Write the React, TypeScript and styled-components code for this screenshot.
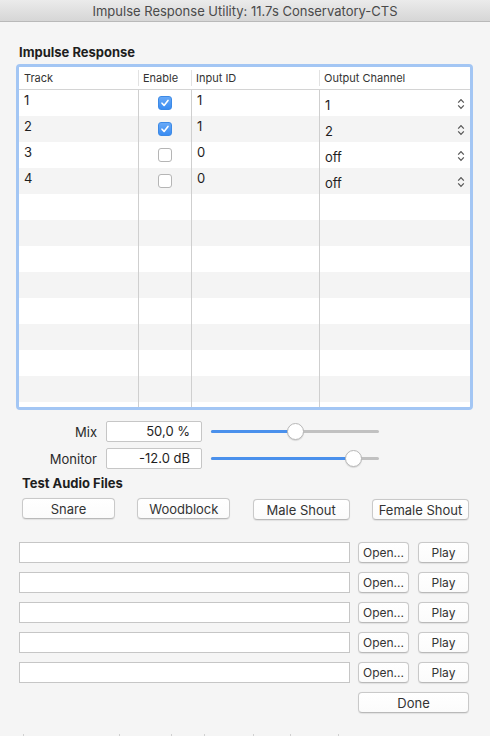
import React from "react";
import styled, { createGlobalStyle } from "styled-components";

const FONT = `Inter, "Liberation Sans", Arial, sans-serif`;

const Global = createGlobalStyle`
  html, body { margin: 0; padding: 0; background: #f5f5f5; }
  * { box-sizing: border-box; }
  body { font-family: ${FONT}; color: #2a2a2a; }
`;

const Window = styled.div`
  width: 490px;
  height: 736px;
  background: #f5f5f5;
  overflow: hidden;
  display: flex;
  flex-direction: column;
`;

const TitleBar = styled.div`
  height: 22px;
  flex: none;
  background: linear-gradient(#ebebeb, #d6d6d6);
  border-bottom: 1px solid #b9b9b9;
  display: flex;
  align-items: center;
  justify-content: center;
  font-size: 13px;
  color: #4a4a4a;
`;

const Content = styled.div`
  display: flex;
  flex-direction: column;
  padding-top: 22px;
`;

const SectionTitle = styled.div<{ $indent: number; $top?: number }>`
  font-size: 13px;
  line-height: 16px;
  font-weight: 700;
  color: #1e1e1e;
  margin-left: ${(p) => p.$indent}px;
  margin-top: ${(p) => p.$top ?? 0}px;
`;

const TableFrame = styled.div`
  margin: 4px 0 0 16px;
  width: 457px;
  height: 346px;
  border: 3px solid #a3c6f4;
  border-radius: 4px;
  background: #fff;
  display: flex;
  flex-direction: column;
  overflow: hidden;
`;

const COLS = "119px 53px 128px 1fr";

const HeaderRow = styled.div`
  display: grid;
  grid-template-columns: ${COLS};
  height: 23px;
  flex: none;
  border-bottom: 1px solid #d4d4d4;
  background: #fff;
`;

const HeaderCell = styled.div<{ $sep?: boolean }>`
  position: relative;
  font-size: 11px;
  color: #333;
  padding-left: 5px;
  display: flex;
  align-items: center;
  ${(p) =>
    p.$sep &&
    `&::before { content: ""; position: absolute; left: 0; top: 3px; bottom: 3px; width: 1px; background: #e2e2e2; }`}
`;

const Body = styled.div`
  flex: 1;
  overflow: hidden;
`;

const Row = styled.div<{ $striped: boolean }>`
  display: grid;
  grid-template-columns: ${COLS};
  height: 26px;
  background: ${(p) => (p.$striped ? "#f4f4f4" : "#fff")};
`;

const Cell = styled.div<{ $sep?: boolean }>`
  font-size: 13px;
  line-height: 16px;
  padding: 2px 0 0 5px;
  color: #1e1e1e;
  border-left: ${(p) => (p.$sep ? "1px solid #cfcfcf" : "none")};
`;

const CheckCell = styled.div`
  border-left: 1px solid #cfcfcf;
  display: flex;
  align-items: center;
  justify-content: center;
`;

const CheckBox = styled.div<{ $checked: boolean }>`
  width: 14px;
  height: 14px;
  border-radius: 3px;
  display: flex;
  align-items: center;
  justify-content: center;
  background: ${(p) => (p.$checked ? "linear-gradient(#68a9f7, #3a8cf2)" : "#fff")};
  border: 1px solid ${(p) => (p.$checked ? "#3d8ae6" : "#b5b5b5")};
`;

const PopupCell = styled.div`
  border-left: 1px solid #cfcfcf;
  display: flex;
  align-items: flex-start;
  justify-content: space-between;
  padding: 7px 5px 0 5px;
  font-size: 13px;
  line-height: 16px;
  color: #1e1e1e;
`;

const Chevrons = styled.svg`
  width: 8px;
  height: 12px;
  margin-top: 1px;
  flex: none;
`;

const ControlGrid = styled.div`
  display: grid;
  grid-template-columns: 97px 96px 168px;
  grid-auto-rows: 21px;
  column-gap: 9px;
  row-gap: 6px;
  margin-top: 11px;
  align-items: center;
`;

const Label = styled.div`
  font-size: 13px;
  text-align: right;
  color: #2a2a2a;
`;

const ValueField = styled.div`
  height: 21px;
  background: #fff;
  border: 1px solid #c6c6c6;
  border-radius: 2px;
  font-size: 13px;
  line-height: 19px;
  text-align: right;
  padding-right: 11px;
  color: #1e1e1e;
`;

const SliderWrap = styled.div`
  position: relative;
  height: 21px;
  display: flex;
  align-items: center;
`;

const Track = styled.div`
  position: relative;
  width: 100%;
  height: 3px;
  border-radius: 2px;
  background: #c1c1c1;
`;

const Fill = styled.div`
  position: absolute;
  left: 0;
  top: 0;
  height: 3px;
  border-radius: 2px;
  background: #4a90ec;
`;

const Thumb = styled.div`
  position: absolute;
  top: 2px;
  width: 17px;
  height: 17px;
  border-radius: 50%;
  background: #fff;
  border: 1px solid #b8b8b8;
  box-shadow: 0 1px 1px rgba(0, 0, 0, 0.12);
`;

const Slider = ({ value }: { value: number }) => {
  const left = value * (168 - 17);
  return (
    <SliderWrap>
      <Track>
        <Fill style={{ width: left + 8 }} />
      </Track>
      <Thumb style={{ left }} />
    </SliderWrap>
  );
};

const ButtonRow = styled.div`
  display: flex;
  justify-content: space-between;
  align-items: flex-start;
  margin: 7px 21px 0 22px;
`;

const PushButton = styled.button<{ $w: number; $size?: number; $dy?: number }>`
  width: ${(p) => p.$w}px;
  height: 21px;
  padding: 0;
  margin-top: ${(p) => p.$dy ?? 0}px;
  background: linear-gradient(#ffffff, #fbfbfb);
  border: 1px solid #c9c9c9;
  border-bottom-color: #b9b9b9;
  border-radius: 4px;
  box-shadow: 0 0.5px 1px rgba(0, 0, 0, 0.08);
  font-family: ${FONT};
  font-size: ${(p) => p.$size ?? 13}px;
  color: #333;
  flex: none;
`;

const FileList = styled.div`
  display: flex;
  flex-direction: column;
  gap: 9px;
  margin: 22px 0 0 19px;
`;

const FileRow = styled.div`
  display: flex;
  align-items: center;
`;

const FileField = styled.div`
  width: 331px;
  height: 21px;
  background: #fff;
  border: 1px solid #c6c6c6;
  margin-right: 8px;
`;

const DoneRow = styled.div`
  display: flex;
  padding-left: 339px;
`;

const Gap = styled.div<{ $w: number }>`
  width: ${(p) => p.$w}px;
  flex: none;
`;

const TickRow = styled.div`
  display: flex;
  margin-top: 21px;
  height: 3px;
`;

const Tick = styled.div<{ $at: number }>`
  width: 1px;
  height: 3px;
  background: #d0d0d0;
  margin-left: ${(p) => p.$at}px;
`;

const ChevronIcon = () => (
  <Chevrons viewBox="0 0 8 12">
    <path d="M1.2 4.6 L4 1.6 L6.8 4.6" fill="none" stroke="#555" strokeWidth="1.2" />
    <path d="M1.2 7.4 L4 10.4 L6.8 7.4" fill="none" stroke="#555" strokeWidth="1.2" />
  </Chevrons>
);

const CheckMark = () => (
  <svg width="10" height="10" viewBox="0 0 10 10">
    <path d="M2 5.2 L4.1 7.4 L8 2.4" fill="none" stroke="#fff" strokeWidth="1.6" strokeLinecap="round" strokeLinejoin="round" />
  </svg>
);

type TrackRow = { id: string; enabled: boolean; input: string; output: string };

const tracks: TrackRow[] = [
  { id: "1", enabled: true, input: "1", output: "1" },
  { id: "2", enabled: true, input: "1", output: "2" },
  { id: "3", enabled: false, input: "0", output: "off" },
  { id: "4", enabled: false, input: "0", output: "off" },
];

export default function App() {
  const emptyRows = Array.from({ length: 9 });
  return (
    <>
      <Global />
      <Window>
        <TitleBar>Impulse Response Utility: 11.7s Conservatory-CTS</TitleBar>
        <Content>
          <SectionTitle $indent={19}>Impulse Response</SectionTitle>
          <TableFrame>
            <HeaderRow>
              <HeaderCell>Track</HeaderCell>
              <HeaderCell $sep>Enable</HeaderCell>
              <HeaderCell $sep>Input ID</HeaderCell>
              <HeaderCell $sep>Output Channel</HeaderCell>
            </HeaderRow>
            <Body>
              {tracks.map((t, i) => (
                <Row key={t.id} $striped={i % 2 === 1}>
                  <Cell>{t.id}</Cell>
                  <CheckCell>
                    <CheckBox $checked={t.enabled}>{t.enabled && <CheckMark />}</CheckBox>
                  </CheckCell>
                  <Cell $sep>{t.input}</Cell>
                  <PopupCell>
                    <span>{t.output}</span>
                    <ChevronIcon />
                  </PopupCell>
                </Row>
              ))}
              {emptyRows.map((_, i) => (
                <Row key={"e" + i} $striped={(i + tracks.length) % 2 === 1}>
                  <Cell />
                  <Cell $sep />
                  <Cell $sep />
                  <Cell $sep />
                </Row>
              ))}
            </Body>
          </TableFrame>

          <ControlGrid>
            <Label>Mix</Label>
            <ValueField>50,0 %</ValueField>
            <Slider value={0.505} />
            <Label>Monitor</Label>
            <ValueField>-12.0 dB</ValueField>
            <Slider value={0.886} />
          </ControlGrid>

          <SectionTitle $indent={22} $top={6}>Test Audio Files</SectionTitle>
          <ButtonRow>
            <PushButton $w={93}>Snare</PushButton>
            <PushButton $w={93}>Woodblock</PushButton>
            <PushButton $w={97} $dy={1}>Male Shout</PushButton>
            <PushButton $w={97} $dy={1}>Female Shout</PushButton>
          </ButtonRow>

          <FileList>
            {[0, 1, 2, 3, 4].map((i) => (
              <FileRow key={i}>
                <FileField />
                <PushButton $w={51} $size={12}>Open...</PushButton>
                <Gap $w={9} />
                <PushButton $w={51} $size={12}>Play</PushButton>
              </FileRow>
            ))}
            <DoneRow>
              <PushButton $w={111}>Done</PushButton>
            </DoneRow>
          </FileList>

          <TickRow>
            <Tick $at={23} />
            <Tick $at={95} />
            <Tick $at={51} />
            <Tick $at={32} />
            <Tick $at={48} />
            <Tick $at={36} />
            <Tick $at={47} />
          </TickRow>
        </Content>
      </Window>
    </>
  );
}
